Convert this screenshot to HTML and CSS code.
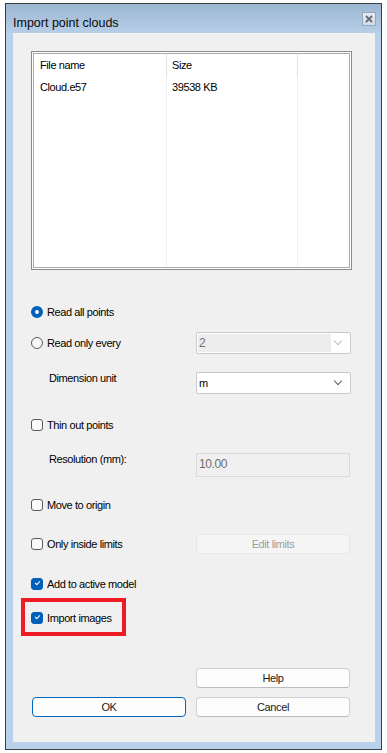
FILE: index.html
```html
<!DOCTYPE html>
<html lang="en">
<head>
    <meta charset="UTF-8">
    <meta name="viewport" content="width=device-width, initial-scale=1.0">
    <title>Import point clouds</title>
    <link rel="stylesheet" href="styles.css">
</head>
<body>
    <div class="window">
        <div class="titlebar">
            <span class="title">Import point clouds</span>
            <span class="close">
                <svg width="8" height="8" viewBox="0 0 8 8"><path d="M1 1L7 7M7 1L1 7" stroke="#6b6b6b" stroke-width="1.8"/></svg>
            </span>
        </div>
        <div class="frame">
            <div class="client">
                <div class="filelist">
                    <div class="column col-name">
                        <div class="head">File name</div>
                        <div class="cell">Cloud.e57</div>
                    </div>
                    <div class="column col-size">
                        <div class="head">Size</div>
                        <div class="cell">39538 KB</div>
                    </div>
                    <div class="column col-rest">
                        <div class="head"></div>
                    </div>
                </div>

                <div class="options">
                    <div class="row row-1">
                        <label class="check"><span class="radio on"></span>Read all points</label>
                    </div>
                    <div class="row row-2">
                        <label class="check"><span class="radio"></span>Read only every</label>
                        <div class="combo disabled"><span class="combo-text">2</span><span class="chevron"></span></div>
                    </div>
                    <div class="row row-3">
                        <span class="label">Dimension unit</span>
                        <div class="combo"><span class="combo-text">m</span><span class="chevron"></span></div>
                    </div>
                    <div class="row row-4">
                        <label class="check"><span class="box"></span>Thin out points</label>
                    </div>
                    <div class="row row-5">
                        <span class="label">Resolution (mm):</span>
                        <div class="field">10.00</div>
                    </div>
                    <div class="row row-6">
                        <label class="check"><span class="box"></span>Move to origin</label>
                    </div>
                    <div class="row row-7">
                        <label class="check"><span class="box"></span>Only inside limits</label>
                        <button class="btn disabled">Edit limits</button>
                    </div>
                    <div class="row row-8">
                        <label class="check"><span class="box on"></span>Add to active model</label>
                    </div>
                    <div class="row row-9">
                        <label class="check"><span class="box on"></span>Import images</label>
                        <span class="highlight"></span>
                    </div>
                    <div class="row row-help">
                        <span></span>
                        <button class="btn">Help</button>
                    </div>
                    <div class="row row-buttons">
                        <button class="btn btn-default">OK</button>
                        <button class="btn">Cancel</button>
                    </div>
                </div>
            </div>
        </div>
    </div>
</body>
</html>
```

FILE: styles.css
```css
body {
    margin: 0;
    padding: 3px 0 0 5px;
    background-color: #ffffff;
    font-family: "Liberation Sans", Arial, sans-serif;
    font-size: 11px;
    color: #000;
}
.window {
    box-sizing: border-box;
    width: 377px;
    height: 747px;
    border: 1px solid #3a3f45;
    background-color: #b9d1ea;
    display: flex;
    flex-direction: column;
}
.titlebar {
    height: 29px;
    flex: none;
    display: flex;
    align-items: center;
    padding: 0 5px 0 7px;
    background: linear-gradient(#9cb6d2, #b7cee7);
}
.title {
    font-size: 12.5px;
    padding-top: 9px;
    color: #0a0a0a;
}
.close {
    margin-left: auto;
    width: 12px;
    height: 12px;
    border: 1px solid #97a9bd;
    background: linear-gradient(#e3ebf4, #cfdcea);
    display: flex;
    align-items: center;
    justify-content: center;
}
.frame {
    flex: 1;
    display: flex;
    padding: 0 6px 7px 7px;
}
.client {
    flex: 1;
    background-color: #f0f0f0;
    padding: 18px 0 0 18px;
    letter-spacing: -0.4px;
}

/* file list */
.filelist {
    box-sizing: border-box;
    width: 321px;
    height: 219px;
    border: 1px solid #8a8a8a;
    padding: 2px;
    box-shadow: inset 0 0 0 1px #ffffff, inset 0 0 0 2px #a9a9a9;
    background-color: #fff;
    display: flex;
}
.column {
    box-sizing: border-box;
    border-right: 1px solid #eef2f8;
}
.col-name { width: 133px; }
.col-size { width: 131px; }
.col-rest { flex: 1; border-right: none; }
.head {
    height: 23px;
    line-height: 23px;
    margin-right: -1px;
    border-right: 1px solid #e3e3e3;
}
.col-rest .head { margin-right: 0; border-right: none; }
.cell {
    height: 20px;
    line-height: 20px;
}
.col-name .head, .col-name .cell { padding-left: 6px; }
.col-size .head, .col-size .cell { padding-left: 5px; }

/* option rows */
.options {
    display: flex;
    flex-direction: column;
}
.row {
    position: relative;
    display: grid;
    grid-template-columns: 165px 155px;
    align-items: center;
    min-height: 20px;
}
.row-1 { margin-top: 32px; }
.row-2 { margin-top: 10px; }
.row-3 { margin-top: 18px; }
.row-4 { margin-top: 21px; }
.row-5 { margin-top: 18px; }
.row-6 { margin-top: 18px; }
.row-7 { margin-top: 19px; }
.row-8 { margin-top: 20px; }
.row-9 { margin-top: 14px; }
.row-help { margin-top: 40px; }
.row-buttons { margin-top: 9px; }

.check {
    display: flex;
    align-items: center;
    gap: 4px;
}
.label {
    align-self: start;
    padding-left: 18px;
    line-height: 13px;
}
.radio {
    box-sizing: border-box;
    width: 12px;
    height: 12px;
    border-radius: 50%;
    border: 1px solid #5c5c5c;
    background-color: #f7f7f7;
}
.radio.on {
    border: 4px solid #005fb8;
    background-color: #ffffff;
}
.box {
    box-sizing: border-box;
    width: 12px;
    height: 12px;
    border-radius: 3px;
    border: 1px solid #5c5c5c;
    background-color: #f9f9f9;
    position: relative;
}
.box.on {
    border-color: #005fb8;
    background-color: #005fb8;
}
.box.on::after {
    content: "";
    position: absolute;
    left: 3px;
    top: 2px;
    width: 4px;
    height: 2px;
    border-left: 1px solid #ffffff;
    border-bottom: 1px solid #ffffff;
    transform: rotate(-45deg);
}

/* combos and fields */
.combo {
    box-sizing: border-box;
    height: 22px;
    border: 1px solid #c9c9c9;
    border-radius: 2px;
    background-color: #ffffff;
    display: flex;
    align-items: center;
    padding: 1px;
}
.combo-text {
    flex: 1;
    align-self: stretch;
    line-height: 18px;
    padding-left: 1px;
}
.combo.disabled .combo-text {
    background-color: #ededed;
    color: #6d6d6d;
    flex: none;
    width: 132px;
    font-size: 12px;
}
.chevron {
    width: 5px;
    height: 5px;
    border-right: 1px solid #606060;
    border-bottom: 1px solid #606060;
    transform: rotate(45deg);
    margin: -4px 8px 0 auto;
}
.combo.disabled .chevron {
    border-color: #bdbdbd;
}
.field {
    box-sizing: border-box;
    height: 24px;
    width: 154px;
    border: 1px solid #dadada;
    background-color: #f0f0f0;
    color: #6d6d6d;
    padding: 3px 0 0 2px;
    font-size: 12px;
}

/* buttons */
.btn {
    box-sizing: border-box;
    width: 154px;
    height: 20px;
    border: 1px solid #d0d0d0;
    border-bottom-color: #bcbcbc;
    border-radius: 4px;
    background-color: #fdfdfd;
    font-family: inherit;
    font-size: 11px;
    letter-spacing: -0.4px;
    color: #1a1a1a;
    padding: 0;
}
.btn.disabled {
    background-color: #f5f5f5;
    border-color: #e6e6e6;
    color: #9d9d9d;
}
.btn-default {
    margin-left: 1px;
    border: 1px solid #0067c0;
}

/* annotation */
.highlight {
    position: absolute;
    left: -10px;
    top: -10px;
    width: 105px;
    height: 38px;
    box-sizing: border-box;
    border: 4px solid #ed1c24;
}
```
